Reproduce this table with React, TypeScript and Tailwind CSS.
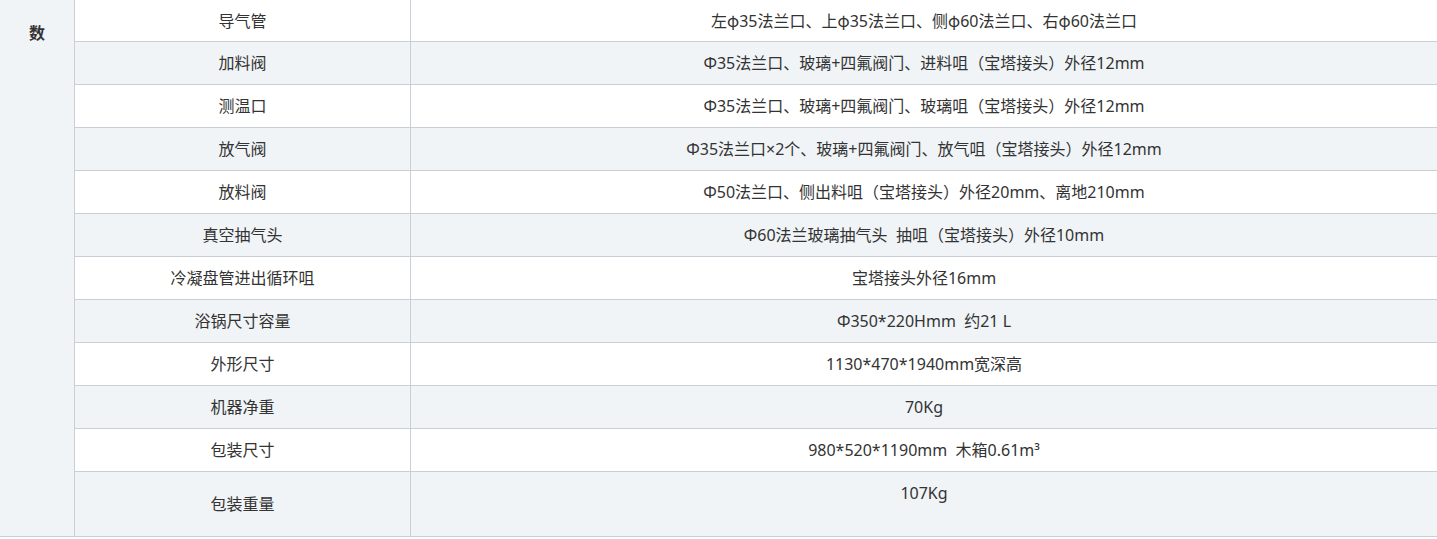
import React from "react";

const rows: [string, string][] = [
  ["导气管", "左φ35法兰口、上φ35法兰口、侧φ60法兰口、右φ60法兰口"],
  ["加料阀", "Φ35法兰口、玻璃+四氟阀门、进料咀（宝塔接头）外径12mm"],
  ["测温口", "Φ35法兰口、玻璃+四氟阀门、玻璃咀（宝塔接头）外径12mm"],
  ["放气阀", "Φ35法兰口×2个、玻璃+四氟阀门、放气咀（宝塔接头）外径12mm"],
  ["放料阀", "Φ50法兰口、侧出料咀（宝塔接头）外径20mm、离地210mm"],
  ["真空抽气头", "Φ60法兰玻璃抽气头  抽咀（宝塔接头）外径10mm"],
  ["冷凝盘管进出循环咀", "宝塔接头外径16mm"],
  ["浴锅尺寸容量", "Φ350*220Hmm  约21 L"],
  ["外形尺寸", "1130*470*1940mm宽深高"],
  ["机器净重", "70Kg"],
  ["包装尺寸", "980*520*1190mm  木箱0.61m³"],
];

function Val({ text }: { text: string }) {
  const parts = text.split("φ");
  return (
    <>
      {parts.map((p, i) => (
        <React.Fragment key={i}>
          {i > 0 && (
            <span style={{ fontFamily: '"Noto Sans CJK SC", sans-serif' }}>φ</span>
          )}
          {p}
        </React.Fragment>
      ))}
    </>
  );
}

export default function App() {
  return (
    <div
      className="flex w-[1437px] bg-white text-[16px] text-[#333333]"
      style={{ fontFamily: '"Noto Sans", "Noto Sans CJK SC", sans-serif' }}
    >
      <div className="w-[75px] shrink-0 border-r border-b border-[#c8cfd7] bg-[#f0f4f7] pt-[23px] text-center font-bold leading-[20px]">
        数
      </div>
      <div className="flex flex-1 flex-col">
        {rows.map(([k, v], i) => (
          <div
            key={i}
            className={`flex border-b border-[#c8cfd7] ${i === 0 ? "h-[42px]" : "h-[43px]"} ${i % 2 === 1 ? "bg-[#f0f4f7]" : "bg-white"}`}
          >
            <div className="flex w-[336px] shrink-0 items-center justify-center border-r border-[#c8cfd7] leading-[20px]">
              {k}
            </div>
            <div className="flex flex-1 items-center justify-center whitespace-pre leading-[20px]">
              <span>
                <Val text={v} />
              </span>
            </div>
          </div>
        ))}
        <div className="flex h-[65px] border-b border-[#c8cfd7] bg-[#f0f4f7]">
          <div className="flex w-[336px] shrink-0 items-center justify-center border-r border-[#c8cfd7] leading-[20px]">
            包装重量
          </div>
          <div className="flex flex-1 items-start justify-center pt-[11px] leading-[20px]">
            107Kg
          </div>
        </div>
      </div>
    </div>
  );
}
